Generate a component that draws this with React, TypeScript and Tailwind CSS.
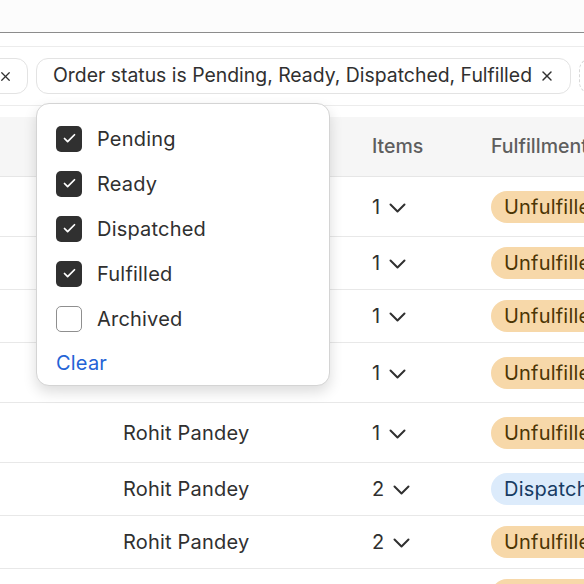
import { X, Check } from "lucide-react";

const rows = [
  { h: "h-[60px]", items: 1, status: "Unfulfilled" },
  { h: "h-[53px]", items: 1, status: "Unfulfilled" },
  { h: "h-[53px]", items: 1, status: "Unfulfilled" },
  { h: "h-[60px]", items: 1, status: "Unfulfilled" },
  { h: "h-[60px]", items: 1, status: "Unfulfilled" },
  { h: "h-[53px]", items: 2, status: "Dispatched" },
  { h: "h-[53px]", items: 2, status: "Unfulfilled" },
  { h: "h-[53px]", items: 1, status: "Unfulfilled" },
];

const options = [
  { label: "Pending", checked: true },
  { label: "Ready", checked: true },
  { label: "Dispatched", checked: true },
  { label: "Fulfilled", checked: true },
  { label: "Archived", checked: false },
];

function Caret() {
  return (
    <svg width="17" height="10" viewBox="0 0 17 10" fill="none" className="mt-[2px] shrink-0">
      <path d="M1.5 1.5 8.5 8.5 15.5 1.5" stroke="#303030" strokeWidth="2" strokeLinecap="round" strokeLinejoin="round" />
    </svg>
  );
}

function StatusBadge({ status }: { status: string }) {
  const tone =
    status === "Dispatched"
      ? "bg-[#dcebfb] text-[#173b63]"
      : "bg-[#f7d8a9] text-[#4b3504]";
  return (
    <span className={`inline-flex h-8 items-center whitespace-nowrap rounded-full px-[13px] text-[20px] tracking-[0.2px] ${tone}`}>
      {status}
    </span>
  );
}

function StatusMenu() {
  return (
    <div className="absolute left-[36px] top-[103px] z-10 flex h-[283px] w-[294px] flex-col rounded-[13px] border border-[#d4d4d4] bg-white pl-[19px] pt-[12px] shadow-[0_6px_14px_rgba(0,0,0,0.14)]">
      {options.map((o) => (
        <label key={o.label} className="flex h-[45px] items-center gap-[15px] text-[20px] tracking-[0.2px] text-[#303030]">
          {o.checked ? (
            <span className="flex h-[26px] w-[26px] items-center justify-center rounded-[5px] bg-[#303030]">
              <Check className="h-[15px] w-[15px] text-white" strokeWidth={2.8} />
            </span>
          ) : (
            <span className="h-[26px] w-[26px] rounded-[5px] border border-[#8f8f8f] bg-white" />
          )}
          {o.label}
        </label>
      ))}
      <button className="mt-[7px] self-start text-[20px] tracking-[0.2px] text-[#2463d6]">Clear</button>
    </div>
  );
}

export default function App() {
  return (
    <main className="relative h-[584px] w-[584px] overflow-hidden bg-white font-['Inter',sans-serif] text-[#303030]">
      <div className="h-[33px] border-b border-[#8c8c8c] bg-[#fcfcfc]" />
      <div className="h-[14px] border-b border-[#ececec]" />
      <div className="flex h-[59px] items-center gap-2 border-b border-[#ececec]">
        <div className="-ml-[20px] flex h-9 w-[48px] shrink-0 items-center justify-end rounded-[12px] border border-[#e3e3e3] pr-[14px]">
          <X className="h-[15px] w-[15px]" strokeWidth={2} />
        </div>
        <div className="flex h-9 w-[535px] shrink-0 items-center gap-[7px] rounded-[12px] border border-[#e3e3e3] pl-[16px] text-[19.4px] whitespace-nowrap">
          Order status is Pending, Ready, Dispatched, Fulfilled
          <X className="h-[16px] w-[16px]" strokeWidth={2.2} />
        </div>
        <div className="h-9 w-10 shrink-0 rounded-[12px] border border-dashed border-[#d8d8d8]" />
      </div>
      <div className="h-[11px]" />
      <div className="flex h-[60px] items-center border-b border-[#e6e6e6] bg-[#f6f6f6] text-[19.5px] font-medium text-[#5e5e5e]">
        <div className="w-[372px] shrink-0" />
        <div className="w-[119px] shrink-0">Items</div>
        <div className="whitespace-nowrap">Fulfillment</div>
      </div>
      {rows.map((r, i) => (
        <div key={i} className={`flex items-center border-b border-[#e8e8e8] text-[20px] tracking-[0.2px] ${r.h}`}>
          <div className="w-[123px] shrink-0" />
          <div className="w-[249px] shrink-0 whitespace-nowrap">Rohit Pandey</div>
          <div className="flex w-[119px] shrink-0 items-center gap-[9px]">
            {r.items}
            <Caret />
          </div>
          <StatusBadge status={r.status} />
        </div>
      ))}
      <StatusMenu />
    </main>
  );
}
